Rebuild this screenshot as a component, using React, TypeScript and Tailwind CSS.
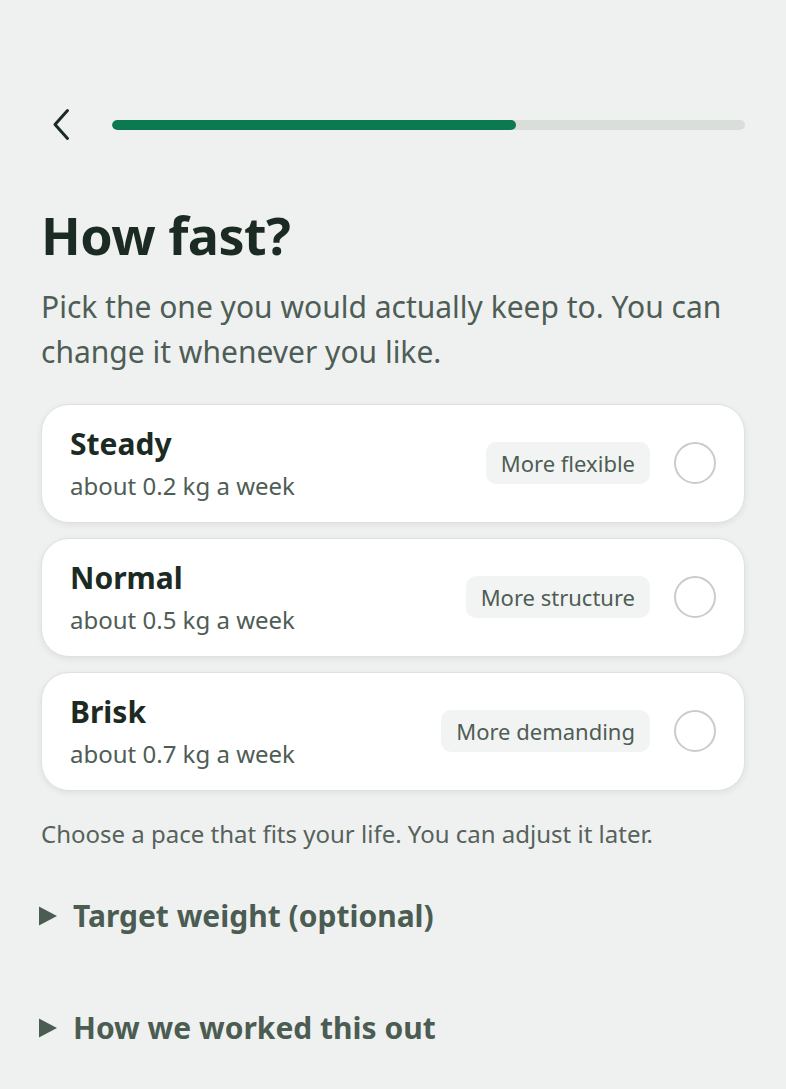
import React from "react";

const options = [
  { title: "Steady", sub: "about 0.2 kg a week", badge: "More flexible" },
  { title: "Normal", sub: "about 0.5 kg a week", badge: "More structure" },
  { title: "Brisk", sub: "about 0.7 kg a week", badge: "More demanding" },
];

function Triangle() {
  return (
    <svg width="18" height="20" viewBox="0 0 18 20" className="shrink-0 -ml-[2px]">
      <path d="M0 0.5 L18 10 L0 19.5 Z" fill="#4b5c52" />
    </svg>
  );
}

export default function App() {
  return (
    <div
      className="min-h-screen bg-[#eff1f0] px-[41px] pt-[105px] pb-10"
      style={{ fontFamily: '"Noto Sans", "Open Sans", sans-serif' }}
    >
      <div className="flex items-center h-[40px]">
        <button className="w-[71px] h-[40px] flex items-center shrink-0">
          <svg width="40" height="40" viewBox="0 0 40 40">
            <path
              d="M28 5.5 L15.5 19.5 L28 33.5"
              fill="none"
              stroke="#1b2a22"
              strokeWidth="3"
              strokeLinecap="round"
              strokeLinejoin="round"
              transform="translate(-1.5 0)"
            />
          </svg>
        </button>
        <div className="flex-1 h-[10px] rounded-full bg-[#d9dedb] overflow-hidden">
          <div className="h-full rounded-full bg-[#0b7a50] w-[63.8%]" />
        </div>
      </div>

      <h1 className="mt-[61px] text-[52px] leading-[57px] font-bold text-[#1b2a22] tracking-[-0.01em]">
        How fast?
      </h1>
      <p className="mt-[21px] text-[30px] leading-[45px] text-[#4e5d55]">
        Pick the one you would actually keep to. You can change it whenever you like.
      </p>

      <div className="mt-[30px] flex flex-col gap-[15px]">
        {options.map((o) => (
          <div
            key={o.title}
            className="flex items-center justify-between bg-white border border-[#dde2df] rounded-[28px] pl-[28px] pr-[28px] pt-[20px] pb-[21px] shadow-[0_2px_6px_rgba(20,40,30,0.08)]"
          >
            <div className="flex flex-col">
              <div className="text-[30px] leading-[38px] font-bold text-[#1b2a22]">{o.title}</div>
              <div className="mt-[8px] text-[24px] leading-[30px] text-[#4e5d55]">{o.sub}</div>
            </div>
            <div className="flex items-center gap-[24px]">
              <span className="h-[42px] flex items-center px-[15px] rounded-[10px] bg-[#f2f4f3] text-[22px] text-[#4e5d55]">
                {o.badge}
              </span>
              <span className="w-[42px] h-[42px] rounded-full border-2 border-[#c9cdca] bg-white" />
            </div>
          </div>
        ))}
      </div>

      <p className="mt-[27px] text-[24px] leading-[32px] text-[#56625a]">
        Choose a pace that fits your life. You can adjust it later.
      </p>

      <div className="mt-[41px] flex items-center gap-[16px] h-[50px]">
        <Triangle />
        <span className="text-[30px] leading-[38px] font-bold text-[#4b5c52]">Target weight (optional)</span>
      </div>
      <div className="mt-[62px] flex items-center gap-[16px] h-[50px]">
        <Triangle />
        <span className="text-[30px] leading-[38px] font-bold text-[#4b5c52]">How we worked this out</span>
      </div>
    </div>
  );
}
